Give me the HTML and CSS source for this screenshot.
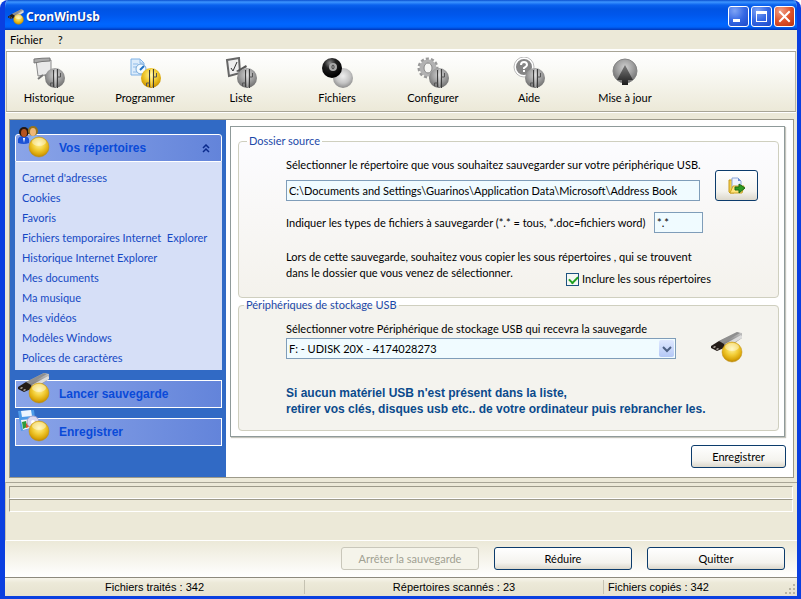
FILE: index.html
```html
<!DOCTYPE html>
<html lang="fr">
<head>
<meta charset="utf-8">
<title>CronWinUsb</title>
<link rel="stylesheet" href="styles.css">
</head>
<body>
<svg class="defs" width="0" height="0" aria-hidden="true">
  <defs>
    <radialGradient id="gold" cx="0.5" cy="0.35" r="0.65">
      <stop offset="0" stop-color="#fff3a0"/><stop offset="0.45" stop-color="#f3cf3a"/><stop offset="0.8" stop-color="#dba70a"/><stop offset="1" stop-color="#b98505"/>
    </radialGradient>
    <radialGradient id="grey" cx="0.5" cy="0.35" r="0.65">
      <stop offset="0" stop-color="#d0d0d0"/><stop offset="0.5" stop-color="#a2a2a2"/><stop offset="1" stop-color="#6c6c6c"/>
    </radialGradient>
    <radialGradient id="pale" cx="0.5" cy="0.4" r="0.6">
      <stop offset="0" stop-color="#eeeeee"/><stop offset="0.6" stop-color="#c4c4c4"/><stop offset="1" stop-color="#8c8c8c"/>
    </radialGradient>
    <radialGradient id="black" cx="0.4" cy="0.25" r="0.7">
      <stop offset="0" stop-color="#8a8a8a"/><stop offset="0.4" stop-color="#222"/><stop offset="1" stop-color="#000"/>
    </radialGradient>
    <linearGradient id="metal" x1="0" y1="0" x2="0" y2="1">
      <stop offset="0" stop-color="#c9c9c9"/><stop offset="0.5" stop-color="#8d8d8d"/><stop offset="1" stop-color="#666"/>
    </linearGradient>
    <linearGradient id="arrow" x1="0" y1="0" x2="0" y2="1">
      <stop offset="0" stop-color="#7a7a7a"/><stop offset="1" stop-color="#1c1c1c"/>
    </linearGradient>
    <g id="marks" fill="none">
      <path d="M20.500 13v17M24.500 12v19" stroke="#3c3c3c"/>
      <path d="M22.500 12v18" stroke="#fff" stroke-opacity=".3"/>
      <path d="M24.500 20h3v-4" stroke="#555"/>
      <path d="M17.500 29v-3h3" stroke="#555"/>
    </g>
    <symbol id="ball-grey" viewBox="0 0 32 32">
      <circle cx="22" cy="21" r="10" fill="url(#grey)"/><use href="#marks"/>
    </symbol>
    <symbol id="ball-gold" viewBox="0 0 32 32">
      <circle cx="21" cy="21" r="10" fill="url(#gold)" stroke="#c08f10" stroke-width=".5"/>
      <ellipse cx="21" cy="16" rx="7" ry="4" fill="#fff" opacity=".4"/>
    </symbol>
    <symbol id="usb" viewBox="0 0 32 32">
      <path d="M8 10 26 1l5 1v5L15 18z" fill="url(#metal)"/>
      <path d="M8 10 26 1l3 1-17 10z" fill="#8f8f8f"/>
      <path d="m14 13 16-9 1 1v2L16 16z" fill="#dcdcdc"/>
      <path d="m0 15 8-5 5 3v4l-7 3-6-3z" fill="#241c18"/>
      <path d="m2 16 2-1 1 1-2 1zM5 18l2-1 1 1-2 1z" fill="#b8b0a8"/>
      <use href="#ball-gold"/>
    </symbol>
  </defs>
</svg>

<div class="window">
  <header class="titlebar">
    <svg class="app-icon" viewBox="0 0 32 32" aria-hidden="true"><use href="#usb"/></svg>
    <h1>CronWinUsb</h1>
    <div class="caption-buttons">
      <button class="caption" aria-label="Minimiser"><svg viewBox="0 0 19 19"><path d="M4 12h7v3H4z" fill="#fff"/></svg></button>
      <button class="caption" aria-label="Agrandir"><svg viewBox="0 0 19 19"><path d="M4 4h11v11H4zM5 7v7h9V7z" fill="#fff" fill-rule="evenodd"/></svg></button>
      <button class="caption close" aria-label="Fermer"><svg viewBox="0 0 19 19"><path d="m5 5 9 9M14 5l-9 9" stroke="#fff" stroke-width="2" stroke-linecap="square"/></svg></button>
    </div>
  </header>

  <nav class="menubar">
    <button>Fichier</button>
    <button>?</button>
  </nav>

  <div class="toolbar">
    <button class="tool">
      <svg viewBox="0 0 32 32" aria-hidden="true">
        <path d="M3 3h15v14l-13 2z" fill="#e9e9e9" stroke="#8a8a8a"/><path d="M1 2q8-1 16-1v3q-8 0-16 2z" fill="#aaa" stroke="#777"/>
        <path d="m10 18-5 4M12 18l3 4" stroke="#777" stroke-width="2"/><use href="#ball-grey"/>
      </svg>
      <span>Historique</span>
    </button>
    <button class="tool">
      <svg viewBox="0 0 32 32" aria-hidden="true">
        <path d="M2 2h9l4 4v12H2z" fill="#dcecfb" stroke="#7fb2e6"/><path d="M11 2v4h4M4 7h5M4 10h4M4 15h6" stroke="#8fbbe8" fill="none"/>
        <circle cx="12" cy="12" r="5" fill="#f4fbff" stroke="#77a8d8"/><path d="m11 13 4-4" stroke="#1d6fc4" stroke-width="2"/>
        <circle cx="22" cy="21" r="10" fill="url(#gold)"/><use href="#marks"/>
      </svg>
      <span>Programmer</span>
    </button>
    <button class="tool">
      <svg viewBox="0 0 32 32" aria-hidden="true">
        <path d="m2 3 12-2 1 15-11 3z" fill="#eee" stroke="#666" stroke-width="2"/><path d="m6 11 2 3 4-9" stroke="#333" fill="none"/>
        <path d="m11 14 10-6 1 2-9 5z" fill="#555"/><use href="#ball-grey"/>
      </svg>
      <span>Liste</span>
    </button>
    <button class="tool">
      <svg viewBox="0 0 32 32" aria-hidden="true">
        <circle cx="22" cy="21" r="10" fill="url(#pale)"/><circle cx="11" cy="11" r="10" fill="url(#black)"/>
        <circle cx="12" cy="10" r="4" fill="#aaa"/><ellipse cx="12" cy="10" rx="1" ry="2" fill="#ddd" stroke="#333"/>
      </svg>
      <span>Fichiers</span>
    </button>
    <button class="tool">
      <svg viewBox="0 0 32 32" aria-hidden="true">
        <circle cx="11" cy="11" r="9" fill="none" stroke="#999" stroke-width="3" stroke-dasharray="3 2"/>
        <circle cx="11" cy="11" r="6" fill="none" stroke="#b2b2b2" stroke-width="5"/><ellipse cx="11" cy="11" rx="4" ry="5" fill="#f6f6f3" stroke="#888"/>
        <use href="#ball-grey"/>
      </svg>
      <span>Configurer</span>
    </button>
    <button class="tool">
      <svg viewBox="0 0 32 32" aria-hidden="true">
        <circle cx="11" cy="10" r="9" fill="#858585" stroke="#fff" stroke-width="2"/><circle cx="11" cy="10" r="10" fill="none" stroke="#bbb"/>
        <path d="M8 8q0-3 3-3t3 3q0 1-3 3v1M11 13v2" stroke="#fff" stroke-width="2" fill="none"/><use href="#ball-grey"/>
      </svg>
      <span>Aide</span>
    </button>
    <button class="tool">
      <svg viewBox="0 0 32 32" aria-hidden="true">
        <circle cx="16" cy="14" r="12" fill="url(#grey)" stroke="#858585"/><path d="m16 8 8 15h-5v5h-6v-5H8z" fill="url(#arrow)"/>
      </svg>
      <span>Mise à jour</span>
    </button>
  </div>

  <main class="main">
    <aside class="sidebar">
      <button class="group rounded">
        <svg class="group-icon" viewBox="0 0 32 32" aria-hidden="true">
          <path d="M0 17v-4q1-3 5-3 5 0 6 3v4q-5 2-11 0z" fill="#1b52d6"/><path d="M11 14v-2q2-3 5-3t5 3v3z" fill="#8fb5ea"/>
          <circle cx="6" cy="6" r="5" fill="#241710"/><ellipse cx="6" cy="7" rx="3" ry="4" fill="#b5541f"/>
          <circle cx="15" cy="5" r="5" fill="#98741a"/><ellipse cx="15" cy="6" rx="3" ry="4" fill="#f0b878"/>
          <path d="m5 12 1 5 1-5z" fill="#fff"/><use href="#ball-gold"/>
        </svg>
        <span>Vos répertoires</span>
        <svg class="chevron" viewBox="0 0 9 9" aria-hidden="true"><path d="m1 4 3-3 3 3M1 8l3-3 3 3" fill="none" stroke="#0a2a8c" stroke-width="1.500"/></svg>
      </button>
      <ul class="links">
        <li><a href="#">Carnet d'adresses</a></li>
        <li><a href="#">Cookies</a></li>
        <li><a href="#">Favoris</a></li>
        <li><a href="#">Fichiers temporaires Internet&nbsp; Explorer</a></li>
        <li><a href="#">Historique Internet Explorer</a></li>
        <li><a href="#">Mes documents</a></li>
        <li><a href="#">Ma musique</a></li>
        <li><a href="#">Mes vidéos</a></li>
        <li><a href="#">Modèles Windows</a></li>
        <li><a href="#">Polices de caractères</a></li>
      </ul>
      <button class="group">
        <svg class="group-icon" viewBox="0 0 32 32" aria-hidden="true"><use href="#usb"/></svg>
        <span>Lancer sauvegarde</span>
      </button>
      <button class="group">
        <svg class="group-icon" viewBox="0 0 32 32" aria-hidden="true">
          <path d="m0 1 16-1 2 17-15 4z" fill="#4e9be8"/><path d="m3 1 10-1 1 6-10 1z" fill="#eef6ff"/><path d="m3 10 12-1 1 8-11 3z" fill="#f8f8f8"/>
          <path d="m4 12 4-1 1 6-4 2z" fill="#2f9a3c"/><path d="m8 14 2-2 1 5-3 1z" fill="#e0522b"/>
          <circle cx="15" cy="12" r="6" fill="#dcd8f0" stroke="#aaa6cc"/><circle cx="15" cy="12" r="2" fill="#fff"/><use href="#ball-gold"/>
        </svg>
        <span>Enregistrer</span>
      </button>
    </aside>

    <section class="content">
      <form class="panel" id="config">
        <fieldset class="source">
          <legend>Dossier source</legend>
          <div class="path-row">
            <div class="path-field">
              <label for="path">Sélectionner le répertoire que vous souhaitez sauvegarder sur votre périphérique USB.</label>
              <input id="path" type="text" value="C:\Documents and Settings\Guarinos\Application Data\Microsoft\Address Book">
            </div>
            <button type="button" class="btn browse" aria-label="Parcourir">
              <svg viewBox="0 0 18 18" aria-hidden="true">
                <path d="M1 3h4l1 2v11H2L1 15z" fill="#f2cf4a" stroke="#c79a1c"/><path d="M4 1h6l3 3v8H4z" fill="#eef3ff" stroke="#8ba6d8"/>
                <path d="M10 1v3h3" fill="#6f8fd0"/><path d="m2 16 3-7h11l-2 7z" fill="#ffe37a" stroke="#c9a227"/>
                <path d="M7 10h4V7l6 4-6 5v-3H7z" fill="#2e9b22" stroke="#1b6b14"/>
              </svg>
            </button>
          </div>
          <div class="types-row">
            <label for="types">Indiquer les types de fichiers à sauvegarder (*.* = tous, *.doc=fichiers word)</label>
            <input id="types" type="text" value="*.*">
          </div>
          <p class="question">Lors de cette sauvegarde, souhaitez vous copier les sous répertoires , qui se trouvent</p>
          <div class="sub-row">
            <p>dans le dossier que vous venez de sélectionner.</p>
            <label class="check"><input type="checkbox" checked>Inclure les sous répertoires</label>
          </div>
        </fieldset>
        <fieldset class="usb">
          <legend>Périphériques de stockage USB</legend>
          <div class="device-row">
            <div class="device-field">
              <label for="device">Sélectionner votre Périphérique de stockage USB qui recevra la sauvegarde</label>
              <div class="combo">
                <select id="device"><option>F: - UDISK 20X - 4174028273</option></select>
                <svg viewBox="0 0 15 17" aria-hidden="true"><path d="m4 7 4 4 4-4" fill="none" stroke="#4d6185" stroke-width="2"/></svg>
              </div>
            </div>
            <svg class="key" viewBox="0 0 32 32" aria-hidden="true"><use href="#usb"/></svg>
          </div>
          <p class="note">Si aucun matériel USB n'est présent dans la liste,<br>retirer vos clés, disques usb etc.. de votre ordinateur puis rebrancher les.</p>
        </fieldset>
      </form>
      <button class="btn save" form="config" type="button">Enregistrer</button>
    </section>
  </main>

  <div class="progress-area">
    <div class="progress"></div>
    <div class="progress"></div>
  </div>

  <div class="actions">
    <button class="btn" disabled>Arrêter la sauvegarde</button>
    <button class="btn">Réduire</button>
    <button class="btn">Quitter</button>
  </div>

  <footer class="status">
    <span>Fichiers traités : 342</span>
    <span>Répertoires scannés : 23</span>
    <span>Fichiers copiés : 342</span>
    <svg class="grip" viewBox="0 0 12 12" aria-hidden="true"><path d="M9 1h2v2H9zM5 5h2v2H5zM9 5h2v2H9zM1 9h2v2H1zM5 9h2v2H5zM9 9h2v2H9z" fill="#b8b4a2"/></svg>
  </footer>
</div>
</body>
</html>
```
FILE: styles.css
```css
* { box-sizing: border-box; }

body {
  margin: 0;
  background: #fff;
  color: #000;
  font: 11px/14px Lato, "Liberation Sans", sans-serif;
}

.defs { position: absolute; }

button, input, select { font: inherit; color: inherit; }
button { padding: 0; border: 0; background: none; }
p { margin: 0; }
svg { display: block; }

.window {
  display: flex;
  flex-direction: column;
  min-height: 100vh;
  border: solid #0a3fe0;
  border-width: 0 4px 3px 5px;
  border-radius: 8px 8px 0 0;
  overflow: hidden;
  background: #ece9d8;
}

/* Title bar */
.titlebar {
  display: flex;
  align-items: center;
  height: 30px;
  margin: 0 -4px 0 -5px;
  padding: 3px 6px 0 8px;
  background: linear-gradient(#0a4fd0 0, #3d95ff 2px, #0a62ee 5px, #0054e3 9px, #0057ec 15px, #0066ff 24px, #0062f8 27px, #0036b8 30px);
}
.app-icon { width: 16px; height: 16px; }
.titlebar h1 {
  flex: 1;
  margin: 0 0 0 2px;
  color: #fff;
  font: bold 12px/18px "Noto Sans", sans-serif;
  text-shadow: 1px 1px 0 #0a2f92;
}
.caption-buttons { display: flex; gap: 2px; }
.caption {
  width: 21px;
  height: 21px;
  border: 1px solid #fff;
  border-radius: 3px;
  background: radial-gradient(circle at 30% 20%, #7fa4f5, #3568e4 50%, #1c49c8);
}
.close { background: radial-gradient(circle at 30% 20%, #f0a088, #e0532a 50%, #b93210); }

/* Menu bar */
.menubar {
  display: flex;
  gap: 15px;
  height: 19px;
  padding: 3px 5px 0;
}
.menubar button { height: 14px; }

/* Toolbar */
.toolbar {
  display: flex;
  gap: 10px;
  height: 63px;
  margin: 0 1px;
  padding: 6px 0 0;
  border-top: 2px solid #fff;
  border-bottom: 1px solid #a8a596;
  box-shadow: inset 0 1px 0 #a8a596, inset 1px 0 0 #b8b5a6, inset -1px 0 0 #b8b5a6, 0 1px 0 #fff;
  background: linear-gradient(#fff, #fafaf6 30%, #ece9d8);
}
.tool {
  display: flex;
  flex-direction: column;
  align-items: center;
  gap: 2px;
  width: 86px;
  height: 50px;
  flex: none;
}
.tool svg { width: 32px; height: 32px; }

/* Main area */
.main {
  display: flex;
  flex: 1;
  margin: 7px 3px 4px 4px;
  border: 1px solid #9d9a8a;
  background: #fff;
}
.sidebar {
  flex: 0 0 216px;
  padding: 14px 4px 0 5px;
  background: #316ac5;
}
.group {
  position: relative;
  display: flex;
  align-items: center;
  width: 100%;
  height: 28px;
  padding: 0 10px 0 43px;
  margin-bottom: 10px;
  border: 1px solid #fff;
  background: linear-gradient(90deg, #8aa4e8, #6384da);
  color: #0a4ad8;
  font: bold 12px/14px "Liberation Sans", Arial, sans-serif;
  text-align: left;
}
.group.rounded { margin: 0; border-radius: 3px 3px 0 0; }
.group span { flex: 1; }
.group-icon {
  position: absolute;
  left: 2px;
  top: -9px;
  width: 32px;
  height: 32px;
}
.chevron { width: 9px; height: 9px; }
.links {
  margin: 0 0 10px;
  padding: 6px 7px 2px;
  list-style: none;
  background: #d6dff7;
}
.links li { height: 20px; line-height: 20px; white-space: nowrap; }
.links a { color: #1549c4; text-decoration: none; }

.content {
  flex: 1;
  display: flex;
  flex-direction: column;
  padding: 6px 7px 8px 4px;
}
.panel {
  margin-right: 1px;
  padding: 7px 5px 5px 7px;
  border: 1px solid #8f9a9a;
  box-shadow: 1px 1px 1px #c4c4bc;
}

fieldset {
  min-width: 0;
  margin: 0;
  padding: 10px 20px 11px 47px;
  border: 1px solid #cfcfbf;
  border-radius: 4px;
  background: linear-gradient(#fcfcff, #f4f2ec);
}
fieldset.usb { padding-bottom: 13px; background: #f4f3ee; }
legend { padding: 0 2px; color: #1c49a8; }
.source legend { margin-left: -39px; }
.usb legend { margin-left: -42px; }
label { white-space: nowrap; }

input[type="text"], select {
  height: 21px;
  padding: 0 2px;
  border: 1px solid #7f9db9;
  border-radius: 0;
  background: #f0fbff;
}

.path-row { display: flex; align-items: flex-end; justify-content: space-between; }
.path-field { flex: 0 1 414px; min-width: 0; display: flex; flex-direction: column; gap: 8px; }
.types-row { display: flex; align-items: center; margin: 11px 0 16px; }
.types-row label { flex: 0 0 368px; }
.types-row input { width: 49px; }
.question { line-height: 16px; white-space: nowrap; }
.sub-row { display: flex; align-items: flex-start; line-height: 16px; }
.sub-row p { flex: 0 0 280px; }
.check { display: flex; align-items: center; gap: 3px; margin-top: 7px; line-height: 14px; }
.check input {
  appearance: none;
  width: 13px;
  height: 13px;
  margin: 0;
  border: 1px solid #1d5280;
  background: #f6f8f4;
}
.check input:checked::before {
  content: "";
  display: block;
  width: 7px;
  height: 4px;
  margin: 2px;
  border: solid #21a121;
  border-width: 0 0 2px 2px;
  transform: rotate(-45deg);
}

.device-row { display: flex; justify-content: space-between; padding-right: 15px; }
.device-field { flex: 0 1 390px; display: flex; flex-direction: column; gap: 2px; }
.combo { position: relative; }
.combo select { width: 100%; appearance: none; }
.combo svg {
  position: absolute;
  top: 2px;
  right: 2px;
  width: 15px;
  height: 17px;
  border-radius: 2px;
  background: linear-gradient(#dfe8ff, #b4c8f6);
  pointer-events: none;
}
.key { width: 32px; height: 32px; margin-top: 9px; }
.note {
  margin-top: 22px;
  color: #0b4a8c;
  font: bold 12px/16px "Liberation Sans", Arial, sans-serif;
}

/* Push buttons */
.btn {
  height: 23px;
  border: 1px solid #0c3c6c;
  border-radius: 3px;
  background: linear-gradient(#fff, #f4f3ee 70%, #dcd8cc);
}
.btn:disabled { border-color: #c9c7ba; background: #f5f4ea; color: #a1a192; }
.browse { display: flex; align-items: center; justify-content: center; width: 43px; height: 31px; }
.browse svg { width: 18px; height: 18px; }
.save { align-self: flex-end; width: 95px; margin-top: 8px; }

/* Progress */
.progress-area {
  height: 59px;
  padding: 3px 4px 0 3px;
  border: solid;
  border-width: 1px 0 1px 1px;
  border-color: #a8a596 #fff #fff #c4c1b2;
}
.progress {
  height: 13px;
  border: 1px solid;
  border-color: #9d9a8a #fff #fff #9d9a8a;
}

.actions {
  display: flex;
  justify-content: flex-end;
  gap: 15px;
  height: 37px;
  padding: 6px 12px 0 0;
  border-bottom: 1px solid #8c897c;
  background: linear-gradient(#ece9d8, #fff);
}
.actions .btn { width: 138px; }

/* Status bar */
.status {
  position: relative;
  display: grid;
  grid-template-columns: 299fr 299fr 194fr;
  align-items: center;
  height: 18px;
  font-family: "Liberation Sans", Arial, sans-serif;
  text-align: center;
  background: linear-gradient(#f6f4ea, #ece9d8 5px, #e6e2d0);
}
.status span { border-left: 1px solid #c5c2b2; }
.status span:first-child { border-left: 0; }
.status span:nth-child(3) { padding-left: 4px; text-align: left; }
.grip { position: absolute; right: 1px; bottom: 1px; width: 12px; height: 12px; }
```
